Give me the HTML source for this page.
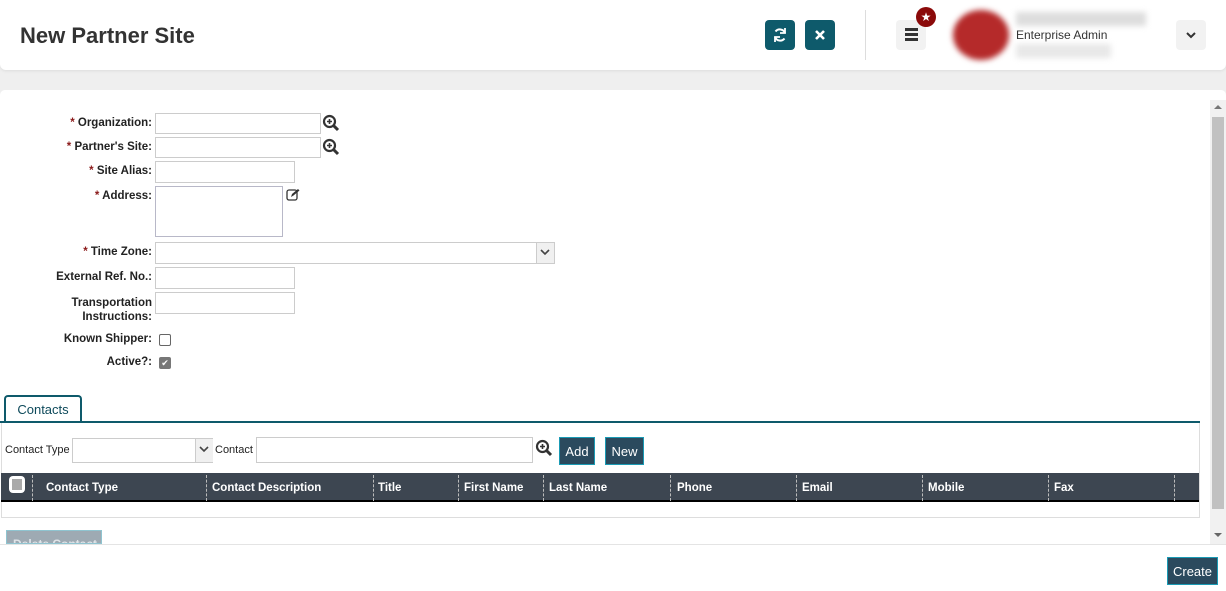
<!DOCTYPE html>
<html><head><meta charset="utf-8"><style>
*{box-sizing:border-box;margin:0;padding:0}
body{width:1226px;height:591px;overflow:hidden;background:#efefef;font-family:"Liberation Sans",sans-serif;position:relative;color:#222}
.a{position:absolute}
.hdr{left:0;top:0;width:1226px;height:70px;background:#fff;border-radius:0 0 6px 6px;box-shadow:0 1px 3px rgba(0,0,0,.08)}
.tb{width:30px;height:30px;border-radius:4px;background:#0e5a6b;color:#fff;display:flex;align-items:center;justify-content:center}
.card{left:0;top:90px;width:1226px;height:501px;background:#fff;border-radius:5px 5px 0 0}
.lbl{font-size:11.5px;font-weight:bold;text-align:right;width:152px;left:0;color:#222}
.lbl b{color:#8b1a1a}
.in{border:1px solid #ccc;background:#fff}
.cb{width:12px;height:12px;border:1px solid #666;border-radius:2px;background:#fff}
.th{font-size:11.5px;font-weight:bold;color:#fff;top:482px}
.dv{top:475px;height:26px;border-left:1px dashed #bbb}
.btn{background:#2b4a5e;border:1px solid #1a9bb5;color:#fff;font-size:13px;display:flex;align-items:center;justify-content:center}
</style></head><body>
<div class="a hdr"></div>
<div class="a" style="left:20px;top:23px;font-size:22px;font-weight:bold;color:#333">New Partner Site</div>
<div class="a tb" style="left:765px;top:20px"><svg width="16" height="16" viewBox="0 0 16 16" fill="none" stroke="#fff" stroke-width="2"><path d="M13 6A5.5 5.5 0 0 0 3.5 4.5"/><path d="M3 10a5.5 5.5 0 0 0 9.5 1.5"/><path d="M13 1v5h-5" stroke-width="1.8"/><path d="M3 15v-5h5" stroke-width="1.8"/></svg></div>
<div class="a tb" style="left:805px;top:20px"><svg width="12" height="12" viewBox="0 0 12 12" stroke="#fff" stroke-width="2.6"><path d="M2 2l8 8M10 2l-8 8"/></svg></div>
<div class="a" style="left:865px;top:10px;width:1px;height:50px;background:#ddd"></div>
<div class="a" style="left:896px;top:20px;width:30px;height:30px;background:#f2f2f2;border-radius:4px"></div>
<div class="a" style="left:905px;top:28px;width:13px;height:3px;background:#333"></div>
<div class="a" style="left:905px;top:33px;width:13px;height:3px;background:#333"></div>
<div class="a" style="left:905px;top:38px;width:13px;height:3px;background:#333"></div>
<div class="a" style="left:916px;top:7px;width:20px;height:20px;border-radius:50%;background:#8b0a0a;color:#fff;font-size:12px;text-align:center;line-height:20px">★</div>
<div class="a" style="left:953px;top:10px;width:56px;height:50px;border-radius:50%;background:#b52a2a;filter:blur(3px)"></div>
<div class="a" style="left:1016px;top:12px;width:130px;height:14px;background:#ddd;filter:blur(3px)"></div>
<div class="a" style="left:1016px;top:28px;font-size:12px;color:#333">Enterprise Admin</div>
<div class="a" style="left:1016px;top:44px;width:95px;height:14px;background:#e8e8e8;filter:blur(3px)"></div>
<div class="a" style="left:1176px;top:20px;width:30px;height:30px;background:#f2f2f2;border-radius:4px"><svg class="a" style="left:9px;top:11px" width="12" height="8" viewBox="0 0 12 8"><path d="M2 2l4 4 4-4" stroke="#333" stroke-width="2" fill="none"/></svg></div>

<div class="a card"></div>
<div class="a" style="left:1210px;top:100px;width:16px;height:444px;background:#f1f1f1"></div>
<div class="a" style="left:1212px;top:117px;width:12px;height:392px;background:#c1c1c1"></div>
<div class="a" style="left:1214px;top:105px;border:4px solid transparent;border-bottom-color:#777;border-top:0"></div>
<div class="a" style="left:1214px;top:533px;border:4px solid transparent;border-top-color:#666;border-bottom:0"></div>

<div class="a lbl" style="top:117px"><b>*</b> Organization:</div>
<div class="a in" style="left:155px;top:113px;width:166px;height:21px"></div>
<div class="a lbl" style="top:141px"><b>*</b> Partner's Site:</div>
<div class="a in" style="left:155px;top:137px;width:166px;height:21px"></div>
<svg class="a" style="left:322px;top:114px" width="18" height="18" viewBox="0 0 18 18"><circle cx="7.5" cy="7.5" r="5.5" stroke="#333" stroke-width="2.2" fill="none"/><path d="M11.5 11.5l4.5 4.5" stroke="#333" stroke-width="3"/><path d="M7.5 5v5M5 7.5h5" stroke="#333" stroke-width="1.6"/></svg>
<svg class="a" style="left:322px;top:138px" width="18" height="18" viewBox="0 0 18 18"><circle cx="7.5" cy="7.5" r="5.5" stroke="#333" stroke-width="2.2" fill="none"/><path d="M11.5 11.5l4.5 4.5" stroke="#333" stroke-width="3"/><path d="M7.5 5v5M5 7.5h5" stroke="#333" stroke-width="1.6"/></svg>
<div class="a lbl" style="top:165px"><b>*</b> Site Alias:</div>
<div class="a in" style="left:155px;top:161px;width:140px;height:22px"></div>
<div class="a lbl" style="top:190px"><b>*</b> Address:</div>
<div class="a in" style="left:155px;top:186px;width:128px;height:51px;border-color:#b8b8c8"></div>
<svg class="a" style="left:286px;top:188px" width="14" height="13" viewBox="0 0 14 13"><rect x="1" y="2" width="10" height="10" rx="2" fill="none" stroke="#333" stroke-width="1.3"/><path d="M5 9l1-3 6-5 1.5 1.5-6 5z" fill="#333"/></svg>
<div class="a lbl" style="top:246px"><b>*</b> Time Zone:</div>
<div class="a in" style="left:155px;top:242px;width:400px;height:22px"></div>
<div class="a" style="left:536px;top:243px;width:18px;height:20px;background:#f0f0f0;border-left:1px solid #ccc"></div>
<svg class="a" style="left:540px;top:249px" width="10" height="7"><path d="M1 1l4 4 4-4" stroke="#444" stroke-width="1.6" fill="none"/></svg>
<div class="a lbl" style="top:271px">External Ref. No.:</div>
<div class="a in" style="left:155px;top:267px;width:140px;height:22px"></div>
<div class="a lbl" style="top:296px;line-height:14px">Transportation<br>Instructions:</div>
<div class="a in" style="left:155px;top:292px;width:140px;height:22px"></div>
<div class="a lbl" style="top:333px">Known Shipper:</div>
<div class="a cb" style="left:159px;top:334px"></div>
<div class="a lbl" style="top:356px">Active?:</div>
<div class="a" style="left:159px;top:357px;width:12px;height:12px;border-radius:2px;background:#777;color:#fff;font-size:9px;line-height:12px;text-align:center">✔</div>

<div class="a" style="left:4px;top:395px;width:78px;height:28px;border:2px solid #0e5a6b;border-bottom:none;border-radius:4px 4px 0 0;background:#fff;font-size:13px;color:#0e4a5b;text-align:center;line-height:26px">Contacts</div>
<div class="a" style="left:0;top:421px;width:1200px;height:2px;background:#0e5a6b"></div>
<div class="a" style="left:1px;top:423px;width:1199px;height:95px;border:1px solid #ddd;border-top:none"></div>
<div class="a" style="left:5px;top:444px;font-size:11px">Contact Type</div>
<div class="a in" style="left:72px;top:438px;width:141px;height:25px"></div>
<div class="a" style="left:195px;top:439px;width:18px;height:23px;background:#f0f0f0;border-left:1px solid #ccc"></div>
<svg class="a" style="left:199px;top:446px" width="10" height="7"><path d="M1 1l4 4 4-4" stroke="#444" stroke-width="1.6" fill="none"/></svg>
<div class="a" style="left:215px;top:444px;font-size:11px">Contact</div>
<div class="a in" style="left:256px;top:437px;width:277px;height:26px"></div>
<svg class="a" style="left:535px;top:439px" width="18" height="18" viewBox="0 0 18 18"><circle cx="7.5" cy="7.5" r="5.5" stroke="#333" stroke-width="2.2" fill="none"/><path d="M11.5 11.5l4.5 4.5" stroke="#333" stroke-width="3"/><path d="M7.5 5v5M5 7.5h5" stroke="#333" stroke-width="1.6"/></svg>
<div class="a btn" style="left:559px;top:437px;width:36px;height:28px">Add</div>
<div class="a btn" style="left:605px;top:437px;width:39px;height:28px">New</div>

<div class="a" style="left:1px;top:473px;width:1198px;height:29px;background:#3d4651;border-bottom:2px solid #000"></div>
<div class="a" style="left:9px;top:476px;width:16px;height:17px;border-radius:4px;background:#fff"></div>
<div class="a" style="left:12px;top:479px;width:10px;height:11px;background:#aaa"></div>
<div class="a dv" style="left:32px"></div>
<div class="a dv" style="left:206px"></div><div class="a dv" style="left:373px"></div><div class="a dv" style="left:458px"></div><div class="a dv" style="left:543px"></div><div class="a dv" style="left:670px"></div><div class="a dv" style="left:796px"></div><div class="a dv" style="left:922px"></div><div class="a dv" style="left:1048px"></div><div class="a dv" style="left:1174px"></div>
<div class="a th" style="left:46px">Contact Type</div>
<div class="a th" style="left:212px">Contact Description</div>
<div class="a th" style="left:378px">Title</div>
<div class="a th" style="left:464px">First Name</div>
<div class="a th" style="left:549px">Last Name</div>
<div class="a th" style="left:677px">Phone</div>
<div class="a th" style="left:802px">Email</div>
<div class="a th" style="left:928px">Mobile</div>
<div class="a th" style="left:1054px">Fax</div>

<div class="a" style="left:6px;top:530px;width:96px;height:14px;background:#9eaab3;border:1px solid #8fc4d0;overflow:hidden;color:#dfe4e8;font-size:12px;font-weight:bold;padding:6px 0 0 6px">Delete Contact</div>
<div class="a" style="left:0;top:544px;width:1226px;height:47px;background:#fff;border-top:1px solid #e4e4e4"></div>
<div class="a btn" style="left:1167px;top:557px;width:51px;height:28px">Create</div>
</body></html>
